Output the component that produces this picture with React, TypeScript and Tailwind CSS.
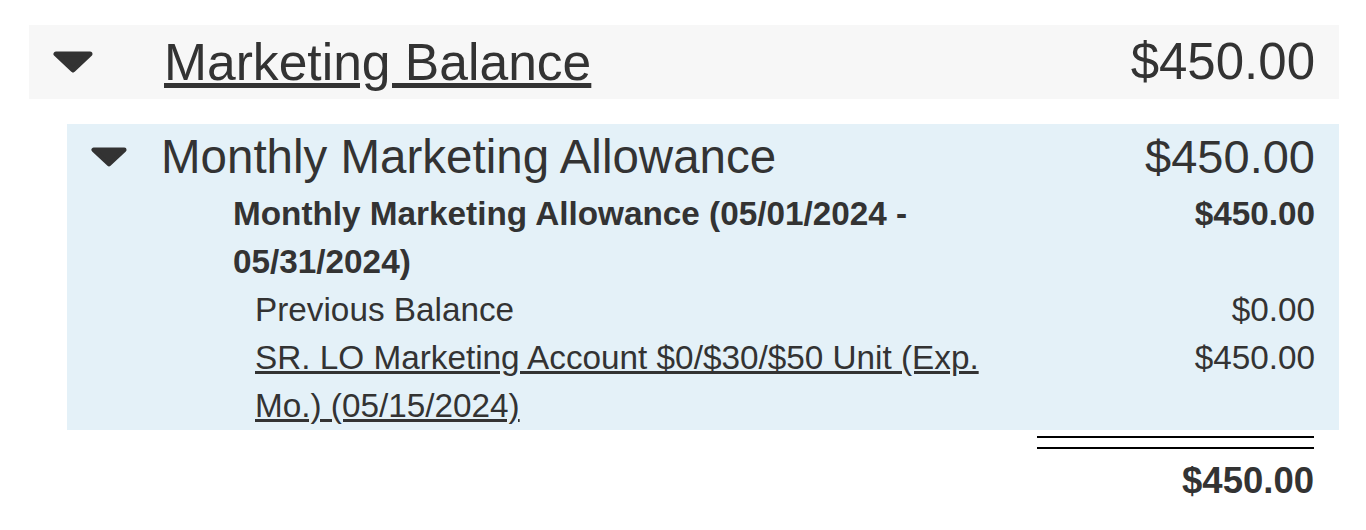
const Caret = ({ className }: { className: string }) => (
  <svg className={className} viewBox="0 0 40 22" fill="#333333">
    <path
      d="M3 3 L37 3 L20 19 Z"
      stroke="#333333"
      strokeWidth="5"
      strokeLinejoin="round"
    />
  </svg>
)

const lines = [
  { label: "Previous Balance", amount: "$0.00", link: false },
  {
    label: "SR. LO Marketing Account $0/$30/$50 Unit (Exp. Mo.) (05/15/2024)",
    amount: "$450.00",
    link: true
  }
]

export default function App() {
  return (
    <div className="bg-white pt-[25px] pl-[29px] pr-[27px] font-['Liberation_Sans',Arial,sans-serif] text-[#333333]">
      <div className="flex h-[74px] items-center bg-[#f7f7f7] pl-[24px] pr-[24px]">
        <Caret className="h-[22px] w-[40px] shrink-0" />
        <a className="ml-[71px] text-[51.6px] leading-[58px] underline">
          Marketing Balance
        </a>
        <span className="ml-auto text-[51px] leading-[58px]">$450.00</span>
      </div>

      <div className="mt-[25px] ml-[38px] bg-[#e4f1f8] pr-[24px]">
        <div className="flex h-[66px] items-center pl-[24px]">
          <Caret className="h-[20px] w-[36px] shrink-0" />
          <span className="ml-[34px] text-[47.5px] leading-[66px]">
            Monthly Marketing Allowance
          </span>
          <span className="ml-auto text-[47px] leading-[66px]">$450.00</span>
        </div>

        <div className="grid grid-cols-[800px_1fr] pl-[166px] text-[33.3px] leading-[48px]">
          <div className="font-bold">
            Monthly Marketing Allowance (05/01/2024 - 05/31/2024)
          </div>
          <div className="text-right font-bold">$450.00</div>
          {lines.map((line) => (
            <div className="contents" key={line.label}>
              <div className="pl-[22px]">
                {line.link ? (
                  <a className="underline">{line.label}</a>
                ) : (
                  line.label
                )}
              </div>
              <div className="text-right">{line.amount}</div>
            </div>
          ))}
        </div>
      </div>

      <div className="flex flex-col items-end pr-[25px]">
        <div className="mt-[6px] h-[13px] w-[277px] border-y-2 border-black" />
        <div className="mt-[12px] text-[36.5px] leading-[40px] font-bold">
          $450.00
        </div>
      </div>
      <div className="h-[30px]" />
    </div>
  )
}
